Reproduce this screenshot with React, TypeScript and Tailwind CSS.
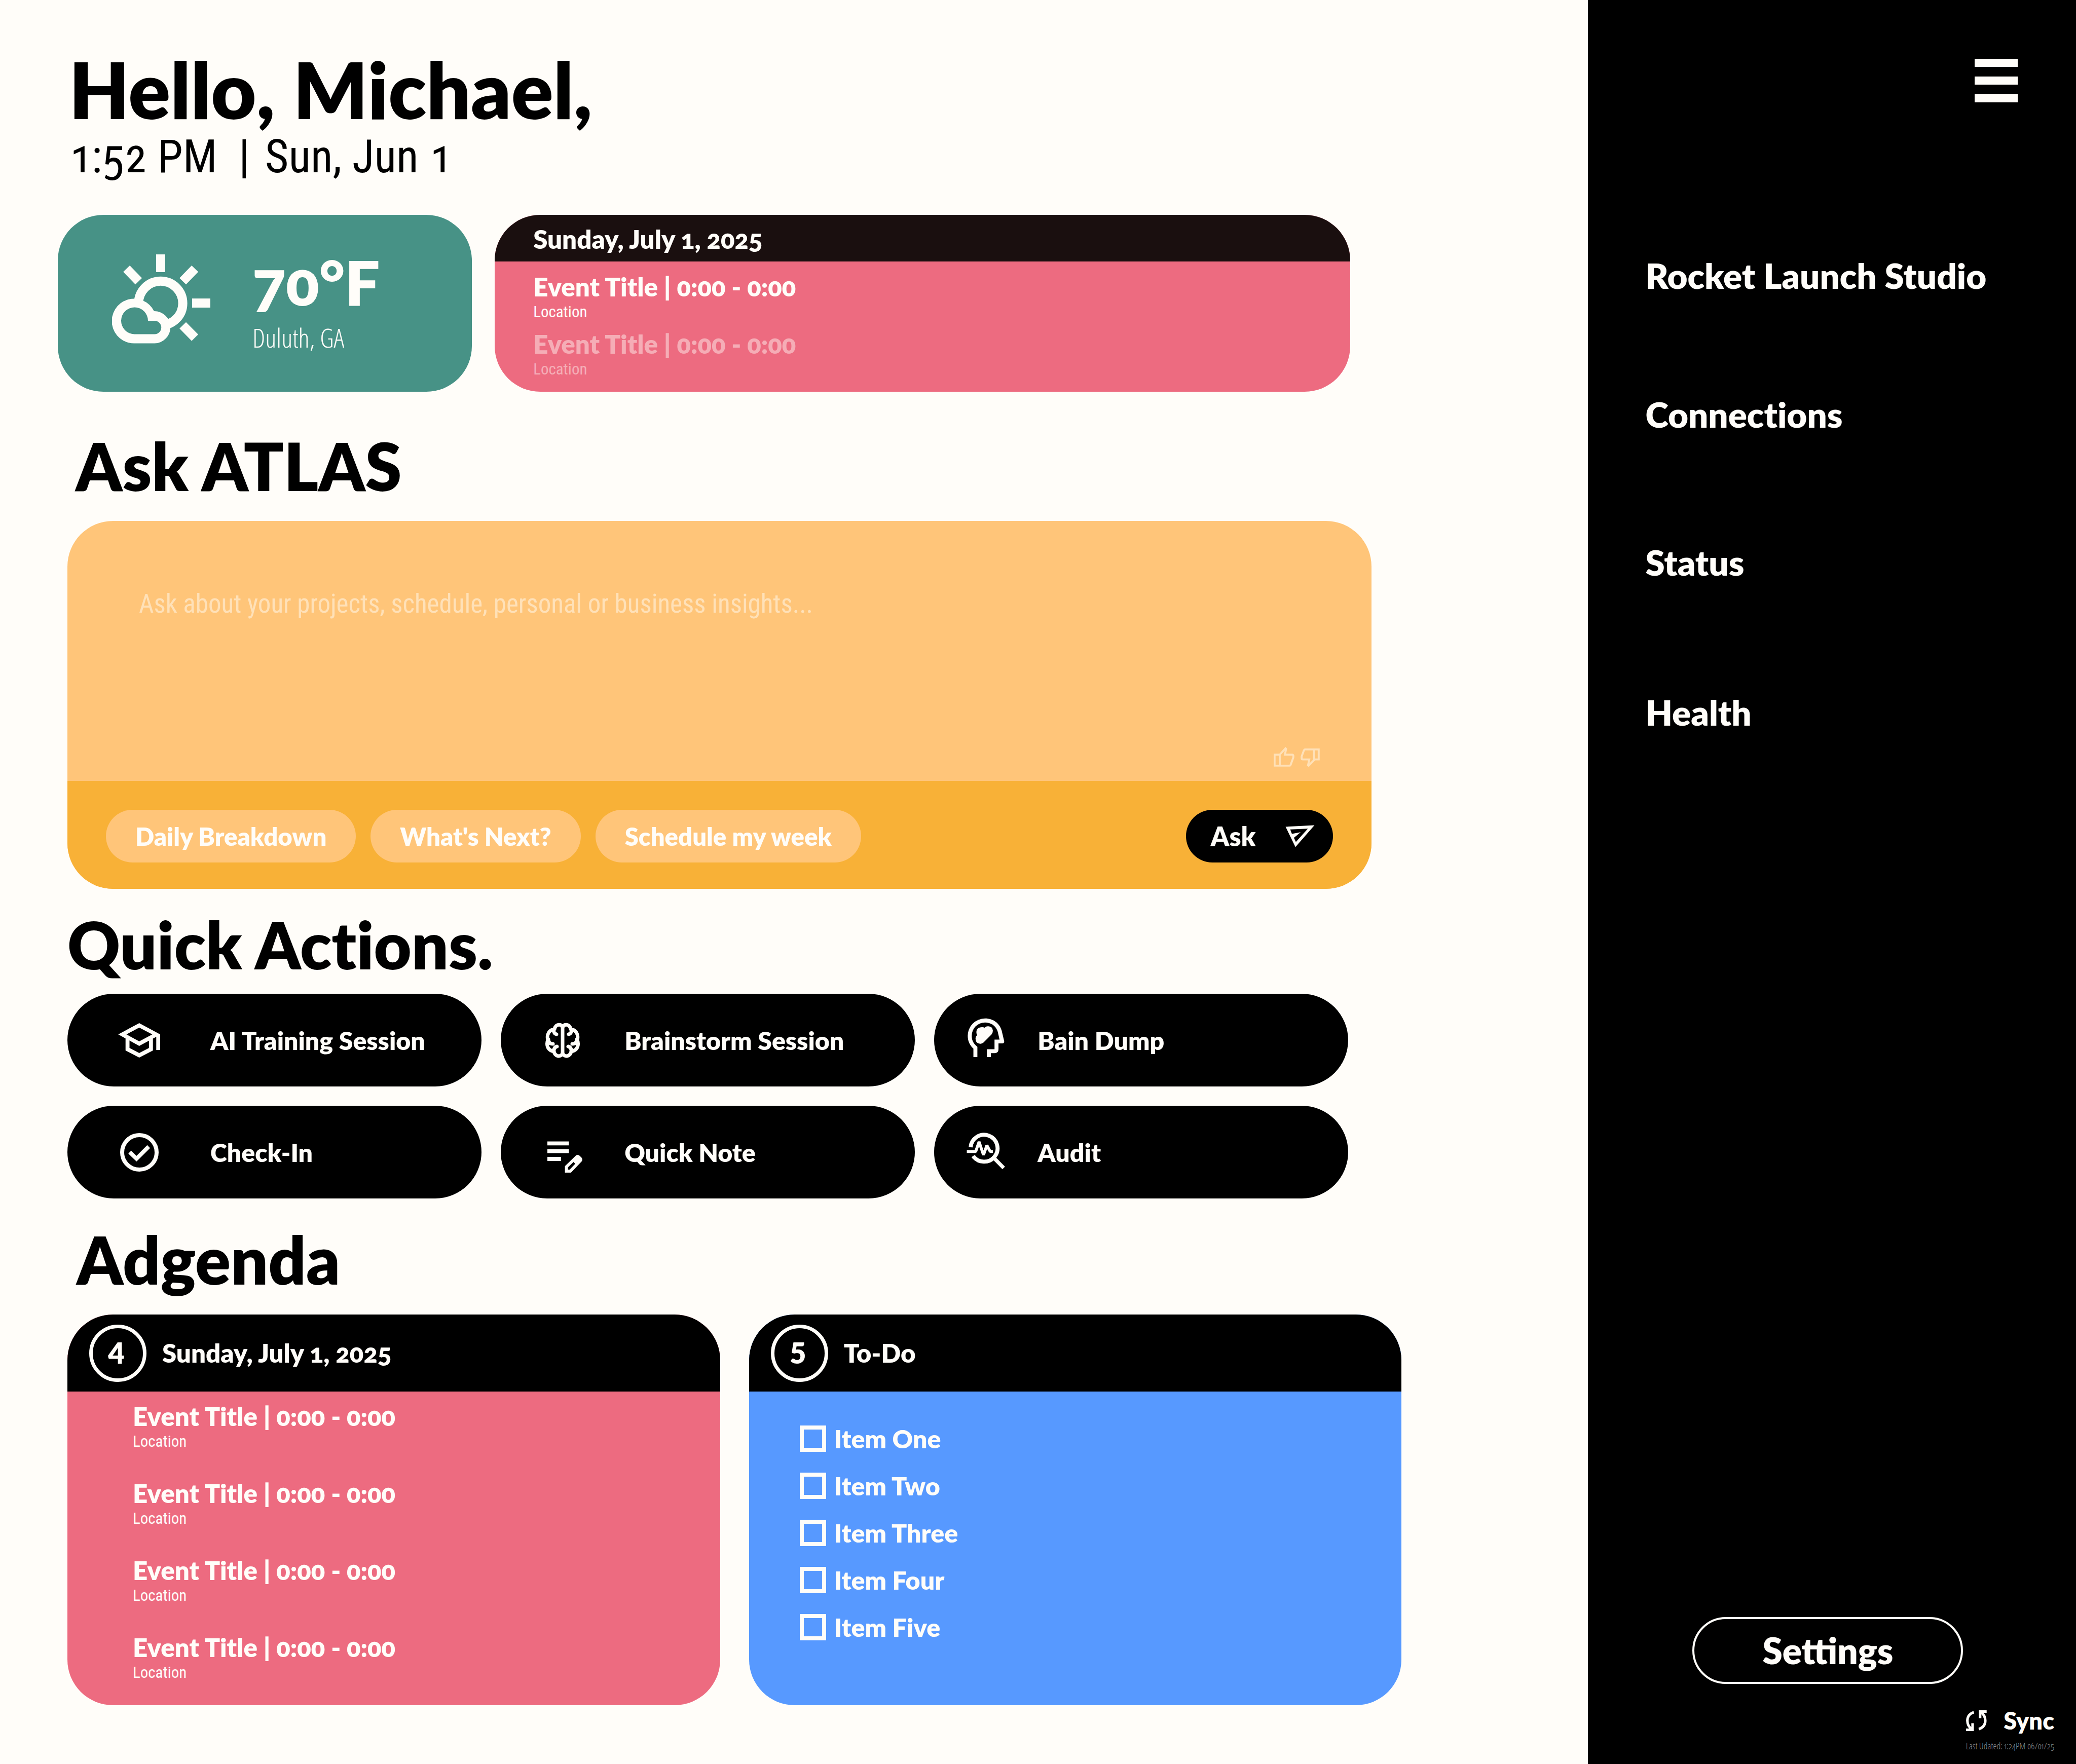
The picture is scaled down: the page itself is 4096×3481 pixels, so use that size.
import React from "react";

const HEAVY = "font-['Lato'] font-extrabold";
const BODY = "font-['Roboto_Condensed',_'Roboto',_sans-serif]";
const LIGHT = "font-['Open_Sans_Condensed_Light',_'Roboto_Condensed',_sans-serif]";

function WeatherIcon() {
  return (
    <svg viewBox="0 0 194 176" className="mt-[8px] h-[176px] w-[194px] shrink-0" aria-hidden="true">
      <g fill="none" stroke="#fffdf9" strokeWidth="18">
        <path d="M96 0V35M158 96H194M28.6 28.2L52.6 53M163.6 28.2L139.6 53M139.6 140L163.6 164.4" />
        <circle cx="96" cy="96.4" r="43.6" />
      </g>
      <path d="M44 175.5A44 44 0 1 1 83 112A31.5 31.5 0 0 1 84 175.5Z" fill="#fffdf9" />
      <path d="M44 157.5A26.5 26.5 0 1 1 71 131H84A13.2 13.2 0 0 1 84 157.5Z" fill="#479286" />
    </svg>
  );
}

const iconClass = "h-[96px] w-[96px] shrink-0";

function CapIcon() {
  return (
    <svg viewBox="0 0 96 96" className={iconClass} fill="#fffdf9" aria-hidden="true">
      <path
        fillRule="evenodd"
        d="M47.7 14L89 36.2V67H81.3V41L47.7 59L6.3 36.2ZM47.7 22.8L22.5 36.2L47.7 50L73.5 36.2Z"
      />
      <path d="M20.7 43.5L28.5 48V63L47.7 73L67 63V48L74.7 44V68L47.7 82L20.7 68Z" />
    </svg>
  );
}

const brainHalf =
  "M48 22C46 15 34 15 32 26C22 27 16 36 19 47C15 58 19 68 31 70C33 80 44 82 48 74M31 26C30 33 32 35 36 36M20 46C20 52 23 55 29 55M31 71C30 64 33 61 37 60";

function BrainIcon() {
  return (
    <svg
      viewBox="0 0 96 96"
      className={iconClass}
      fill="none"
      stroke="#fffdf9"
      strokeWidth="7"
      strokeLinecap="round"
      strokeLinejoin="round"
      aria-hidden="true"
    >
      <path d="M48 22V74" />
      <path d={brainHalf} />
      <path d={brainHalf} transform="matrix(-1 0 0 1 96 0)" />
    </svg>
  );
}

function HeadIcon() {
  return (
    <svg viewBox="52 53 318 318" className={iconClass} fill="#fffdf9" aria-hidden="true">
      <path d="M130 321V266C105 243 93 214 93 182A113 113 0 0 1 206 69C262 69 304 103 316 153L331 216Q333 232 319 232H294V270Q294 296 268 296H244V321H218V270H268V207H301L290 160C281 120 248 95 206 95A87 87 0 0 0 119 182C119 212 132 236 156 254V321Z" />
      <path d="M178 127Q190 124 204 129C212 120 222 120 228 120Q257 122 257 150Q257 165 248 174L196 226Q186 235 174 234Q144 232 144 202Q144 184 155 178Q148 170 150 152Q154 130 178 127Z" />
    </svg>
  );
}

function CheckIcon() {
  return (
    <svg viewBox="0 0 96 96" className={iconClass} fill="none" stroke="#fffdf9" strokeWidth="8" aria-hidden="true">
      <circle cx="48" cy="48" r="34" />
      <path d="M29 47.5L42.3 60.5L66.3 36.6" />
    </svg>
  );
}

function NoteIcon() {
  return (
    <svg viewBox="0 0 96 96" className={iconClass} fill="#fffdf9" aria-hidden="true">
      <path d="M18 26.4H60.4V34.2H18ZM18 41.8H60.4V49.6H18ZM18 57H44.8V65H18Z" />
      <path
        fillRule="evenodd"
        d="M52.6 75.3L74 54.5Q78 51.5 82 55L85.5 58.5Q88.5 62.5 85.5 66L64.6 88H52.6ZM58.6 82V77.5L69.5 67L73 70.5L62 82Z"
      />
    </svg>
  );
}

function AuditIcon() {
  return (
    <svg viewBox="52 786 318 318" className={iconClass} fill="none" stroke="#fffdf9" aria-hidden="true">
      <path d="M112 912A88 88 0 1 1 128 969" strokeWidth="26" />
      <path d="M266 984L328 1047" strokeWidth="24" />
      <path d="M87 940H145L167 876L196 962L218 899L240 940H257" strokeWidth="19" strokeLinejoin="bevel" />
    </svg>
  );
}

function SendIcon() {
  return (
    <svg viewBox="725 607 198 152" className="h-[46px] w-[60px] shrink-0" fill="#fffdf9" aria-hidden="true">
      <path
        fillRule="evenodd"
        d="M730 622L918 612L794 754ZM760 639L771 668L828 657L784 694L797 721L875 634Z"
      />
    </svg>
  );
}

function ThumbUp() {
  return (
    <svg viewBox="650 87 137 130" className="h-[39px] w-[41px]" fill="none" stroke="#ffe1b8" strokeWidth="13" aria-hidden="true">
      <path d="M656 138H690V210H656ZM690 138L728 96L732 100L724 138H772Q780 138 780 150L779 158L762 204Q760 210 754 210H690" />
    </svg>
  );
}

function ThumbDown() {
  return (
    <svg viewBox="827 96 126 120" className="h-[36px] w-[38px]" fill="none" stroke="#ffe1b8" strokeWidth="13" aria-hidden="true">
      <path d="M915 102H946V168H915M915 102H858Q852 102 849 108L834 148V160Q834 168 842 168H884L876 206L880 209L915 173Z" />
    </svg>
  );
}

function SyncIcon() {
  const half = "M193 91C163 101 150 122 150 147C150 168 160 190 180 204M184.500 164V207.500H141";
  return (
    <svg viewBox="141 78 138 138" className="h-[41px] w-[41px] shrink-0" fill="none" stroke="#fffdf9" strokeWidth="17" aria-hidden="true">
      <path d={half} />
      <path d={half} transform="rotate(180 209.5 147)" />
    </svg>
  );
}

function Event({ faded = false }: { faded?: boolean }) {
  return (
    <li className={faded ? "opacity-45" : ""}>
      <h3 className="text-[51px] leading-[60px]">Event Title | 0:00 - 0:00</h3>
      <p className={`${BODY} text-[31px] leading-[40px] font-normal`}>Location</p>
    </li>
  );
}

const actions = [
  { label: "AI Training Session", icon: <CapIcon />, space: "gap-[92px] pl-[94px]" },
  { label: "Brainstorm Session", icon: <BrainIcon />, space: "gap-[74px] pl-[74px]" },
  { label: "Bain Dump", icon: <HeadIcon />, space: "gap-[54px] pl-[54px]" },
  { label: "Check-In", icon: <CheckIcon />, space: "gap-[92px] pl-[94px]" },
  { label: "Quick Note", icon: <NoteIcon />, space: "gap-[74px] pl-[74px]" },
  { label: "Audit", icon: <AuditIcon />, space: "gap-[54px] pl-[54px]" },
];

const nav = [
  { label: "Rocket Launch Studio", space: "mt-[302px]" },
  { label: "Connections", space: "mt-[194px]" },
  { label: "Status", space: "mt-[212px]" },
  { label: "Health", space: "mt-[216px]" },
];

const todos = ["Item One", "Item Two", "Item Three", "Item Four", "Item Five"];
const prompts = ["Daily Breakdown", "What's Next?", "Schedule my week"];

function CountHeader({ count, title }: { count: number; title: string }) {
  return (
    <header className="flex h-[152px] items-center gap-[31px] bg-black pl-[43px]">
      <span className="flex size-[113px] items-center justify-center rounded-full border-[7px] border-[#fffdf9] pr-[6px] text-[56px] leading-none lining-nums">
        {count}
      </span>
      <h3 className="text-[51px] leading-[60px]">{title}</h3>
    </header>
  );
}

export default function App() {
  return (
    <div className={`${HEAVY} flex min-h-screen bg-[#fffdf9] text-[#fffdf9] oldstyle-nums [font-variant-ligatures:no-common-ligatures]`}>
      <main className="flex-1 pt-[100px] pb-[112px]">
        <header className="pl-[136px] text-black">
          <h1 className="text-[154px] leading-[152px]">Hello, Michael,</h1>
          <p className={`${BODY} mt-[6px] flex text-[90px] leading-[104px] font-normal`}>
            <span>1:52 PM</span>
            <span className="mr-[30px] ml-[42px]">|</span>
            <span>Sun, Jun 1</span>
          </p>
        </header>

        <div className="mt-[62px] grid grid-cols-[817fr_1688fr] gap-[45px] pr-[469px] pl-[114px]">
          <section className="flex items-start gap-[83px] rounded-[90px] bg-[#479286] pt-[70px] pl-[107px]">
            <WeatherIcon />
            <div className="flex flex-col gap-[18px]">
              <p className="text-[122px] leading-[124px]">70°F</p>
              <p className={`${LIGHT} text-[52px] leading-[60px] font-normal`}>Duluth, GA</p>
            </div>
          </section>
          <section className="overflow-hidden rounded-[90px] bg-[#ed6b80]">
            <header className="flex h-[92px] items-center bg-[#1a0f0f] pt-[4px] pl-[76px]">
              <h2 className="text-[51px] leading-[60px]">Sunday, July 1, 2025</h2>
            </header>
            <ul className="flex flex-col gap-[13px] pt-[20px] pb-[24px] pl-[76px]">
              <Event />
              <Event faded />
            </ul>
          </section>
        </div>

        <section className="mt-[82px] pr-[427px] pl-[133px]">
          <h2 className="pl-[16px] text-[130px] leading-[128px] text-black">Ask ATLAS</h2>
          <form className="mt-[45px] overflow-hidden rounded-[90px] bg-[#ffc579]" onSubmit={(e) => e.preventDefault()}>
            <textarea
              aria-label="Ask ATLAS"
              placeholder="Ask about your projects, schedule, personal or business insights..."
              className={`${BODY} block h-[446px] w-full resize-none bg-transparent px-[141px] pt-[132px] text-[51px] leading-[64px] font-normal outline-none placeholder:text-[#ffe1b8]`}
            />
            <div className="flex items-end justify-end gap-[12px] pr-[102px] pb-[28px]">
              <button type="button" aria-label="Good answer">
                <ThumbUp />
              </button>
              <button type="button" aria-label="Bad answer">
                <ThumbDown />
              </button>
            </div>
            <div className="flex items-center gap-[29px] bg-[#f8b137] px-[76px] pt-[57px] pb-[52px]">
              {prompts.map((p) => (
                <button key={p} type="button" className="h-[104px] rounded-full bg-[#ffc579] px-[58px] text-[49px] leading-[60px]">
                  {p}
                </button>
              ))}
              <button
                type="submit"
                className="ml-auto flex h-[104px] w-[290px] items-center justify-between rounded-full bg-black pr-[35px] pl-[48px] text-[52px] leading-[60px]"
              >
                Ask
                <SendIcon />
              </button>
            </div>
          </form>
        </section>

        <section className="mt-[46px] pr-[473px] pl-[133px]">
          <h2 className="text-[128px] leading-[128px] text-black">Quick Actions.</h2>
          <div className="mt-[33px] grid grid-cols-3 gap-[38px]">
            {actions.map((a) => (
              <button key={a.label} type="button" className={`flex h-[183px] items-center rounded-full bg-black text-[50px] leading-[60px] ${a.space}`}>
                {a.icon}
                {a.label}
              </button>
            ))}
          </div>
        </section>

        <section className="mt-[56px] pr-[368px] pl-[133px]">
          <h2 className="pl-[18px] text-[130px] leading-[128px] text-black">Adgenda</h2>
          <div className="mt-[45px] grid grid-cols-2 gap-[57px]">
            <section className="overflow-hidden rounded-[90px] bg-[#ed6b80]">
              <CountHeader count={4} title="Sunday, July 1, 2025" />
              <ul className="flex flex-col gap-[52px] pt-[19px] pb-[44px] pl-[129px]">
                <Event />
                <Event />
                <Event />
                <Event />
              </ul>
            </section>
            <section className="overflow-hidden rounded-[90px] bg-[#5799ff]">
              <CountHeader count={5} title="To-Do" />
              <ul className="flex flex-col gap-[41px] pt-[67px] pl-[100px]">
                {todos.map((t) => (
                  <li key={t}>
                    <label className="flex h-[52px] items-center gap-[16px] text-[50px] leading-[52px]">
                      <input type="checkbox" className="size-[52px] appearance-none border-[8px] border-[#fffdf9] checked:bg-[#fffdf9]" />
                      {t}
                    </label>
                  </li>
                ))}
              </ul>
            </section>
          </div>
        </section>
      </main>

      <aside className="flex w-[23.5%] shrink-0 flex-col bg-black pt-[116px] pb-[26px]">
        <button type="button" aria-label="Menu" className="mr-[115px] flex w-[85px] flex-col gap-[19px] self-end">
          <span className="h-[16px] w-full bg-[#fffdf9]" />
          <span className="h-[16px] w-full bg-[#fffdf9]" />
          <span className="h-[16px] w-full bg-[#fffdf9]" />
        </button>
        <nav className="flex flex-col pl-[113px] text-[69px] leading-[80px]">
          {nav.map((n) => (
            <a key={n.label} href="#" className={n.space}>
              {n.label}
            </a>
          ))}
        </nav>
        <button
          type="button"
          className="mt-auto ml-[206px] h-[132px] w-[534px] rounded-full border-4 border-[#fffdf9] text-[71px] leading-[80px] [font-variant-ligatures:common-ligatures]"
        >
          Settings
        </button>
        <div className="mt-[44px] mr-[43px] flex flex-col gap-[12px] self-end">
          <button type="button" className="flex items-center justify-between text-[47px] leading-[56px]">
            <SyncIcon />
            Sync
          </button>
          <p className={`${LIGHT} text-[18px] leading-[20px] font-normal text-[#8a8a8a]`}>Last Udated: 1:24PM 06/01/25</p>
        </div>
      </aside>
    </div>
  );
}
